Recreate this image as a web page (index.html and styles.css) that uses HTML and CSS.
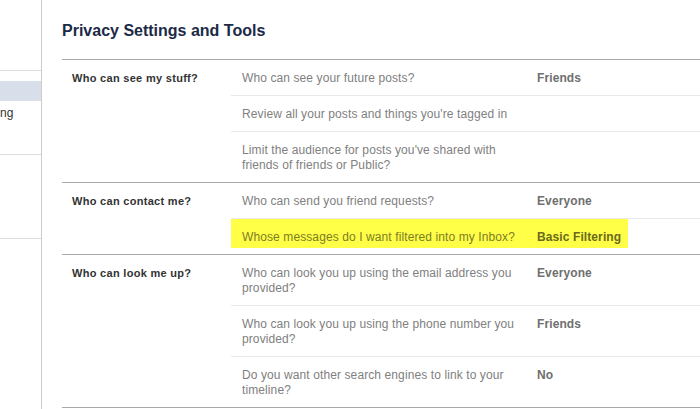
FILE: index.html
```html
<!DOCTYPE html>
<html lang="en">
<head>
  <meta charset="UTF-8" />
  <title>Privacy Settings and Tools</title>
  <link rel="stylesheet" href="styles.css">
</head>
<body>
  <div class="page">
    <nav class="sidebar">
      <div class="side-group">
        <div class="side-item selected"></div>
        <div class="side-item">ng</div>
      </div>
      <div class="side-group"></div>
      <div class="side-group last"></div>
    </nav>

    <main class="content">
      <h1>Privacy Settings and Tools</h1>

      <section class="group">
        <div class="group-label">Who can see my stuff?</div>
        <div class="rows">
          <div class="row">
            <div class="question">Who can see your future posts?</div>
            <div class="value">Friends</div>
          </div>
          <div class="row">
            <div class="question">Review all your posts and things you're tagged in</div>
            <div class="value"></div>
          </div>
          <div class="row">
            <div class="question">Limit the audience for posts you've shared with friends of friends or Public?</div>
            <div class="value"></div>
          </div>
        </div>
      </section>

      <section class="group">
        <div class="group-label">Who can contact me?</div>
        <div class="rows">
          <div class="row">
            <div class="question">Who can send you friend requests?</div>
            <div class="value">Everyone</div>
          </div>
          <div class="row highlight">
            <div class="question">Whose messages do I want filtered into my Inbox?</div>
            <div class="value">Basic Filtering</div>
          </div>
        </div>
      </section>

      <section class="group">
        <div class="group-label">Who can look me up?</div>
        <div class="rows">
          <div class="row">
            <div class="question">Who can look you up using the email address you provided?</div>
            <div class="value">Everyone</div>
          </div>
          <div class="row">
            <div class="question">Who can look you up using the phone number you provided?</div>
            <div class="value">Friends</div>
          </div>
          <div class="row">
            <div class="question">Do you want other search engines to link to your timeline?</div>
            <div class="value">No</div>
          </div>
        </div>
      </section>
    </main>
  </div>
</body>
</html>
```

FILE: styles.css
```css
body {
  margin: 0;
  font-family: "Liberation Sans", Arial, sans-serif;
  background-color: #fff;
  color: #333;
}
.page {
  display: flex;
  min-height: 409px;
}
.sidebar {
  width: 41px;
  flex-shrink: 0;
  border-right: 1px solid #ccc;
  padding-top: 70px;
}
.side-group {
  border-top: 1px solid #ddd;
  padding-top: 10px;
  height: 73px;
}
.side-group.last {
  height: auto;
}
.side-item {
  height: 20px;
  line-height: 20px;
  font-size: 12px;
  white-space: nowrap;
}
.side-item.selected {
  background-color: #d8dfea;
  margin-bottom: 2px;
}
.content {
  flex: 1;
  padding-left: 20px;
}
h1 {
  margin: 0 0 18px;
  padding-top: 21px;
  font-size: 16px;
  line-height: 20px;
  color: #1c2a47;
}
.group {
  display: flex;
  border-top: 1px solid #aaa;
}
.group:last-child {
  border-bottom: 1px solid #aaa;
}
.group-label {
  width: 159px;
  padding: 11px 0 0 10px;
  font-size: 11px;
  font-weight: bold;
  line-height: 15px;
  letter-spacing: 0.3px;
  color: #333;
}
.rows {
  flex: 1;
}
.row {
  display: flex;
  padding: 11px 0 9px 11px;
  font-size: 12px;
  line-height: 15px;
  letter-spacing: 0.1px;
}
.row + .row {
  border-top: 1px solid #e9e9e9;
}
.question {
  width: 285px;
  margin-right: 10px;
  color: #808080;
}
.value {
  font-weight: bold;
  color: #6f6f6f;
}
.row.highlight {
  background: linear-gradient(#ffff48, #ffff48) no-repeat;
  background-size: 398px 29px;
  background-position: -1px 0;
}
.row.highlight .question {
  color: #7d7d22;
}
.row.highlight .value {
  color: #6a6a1c;
}
```
